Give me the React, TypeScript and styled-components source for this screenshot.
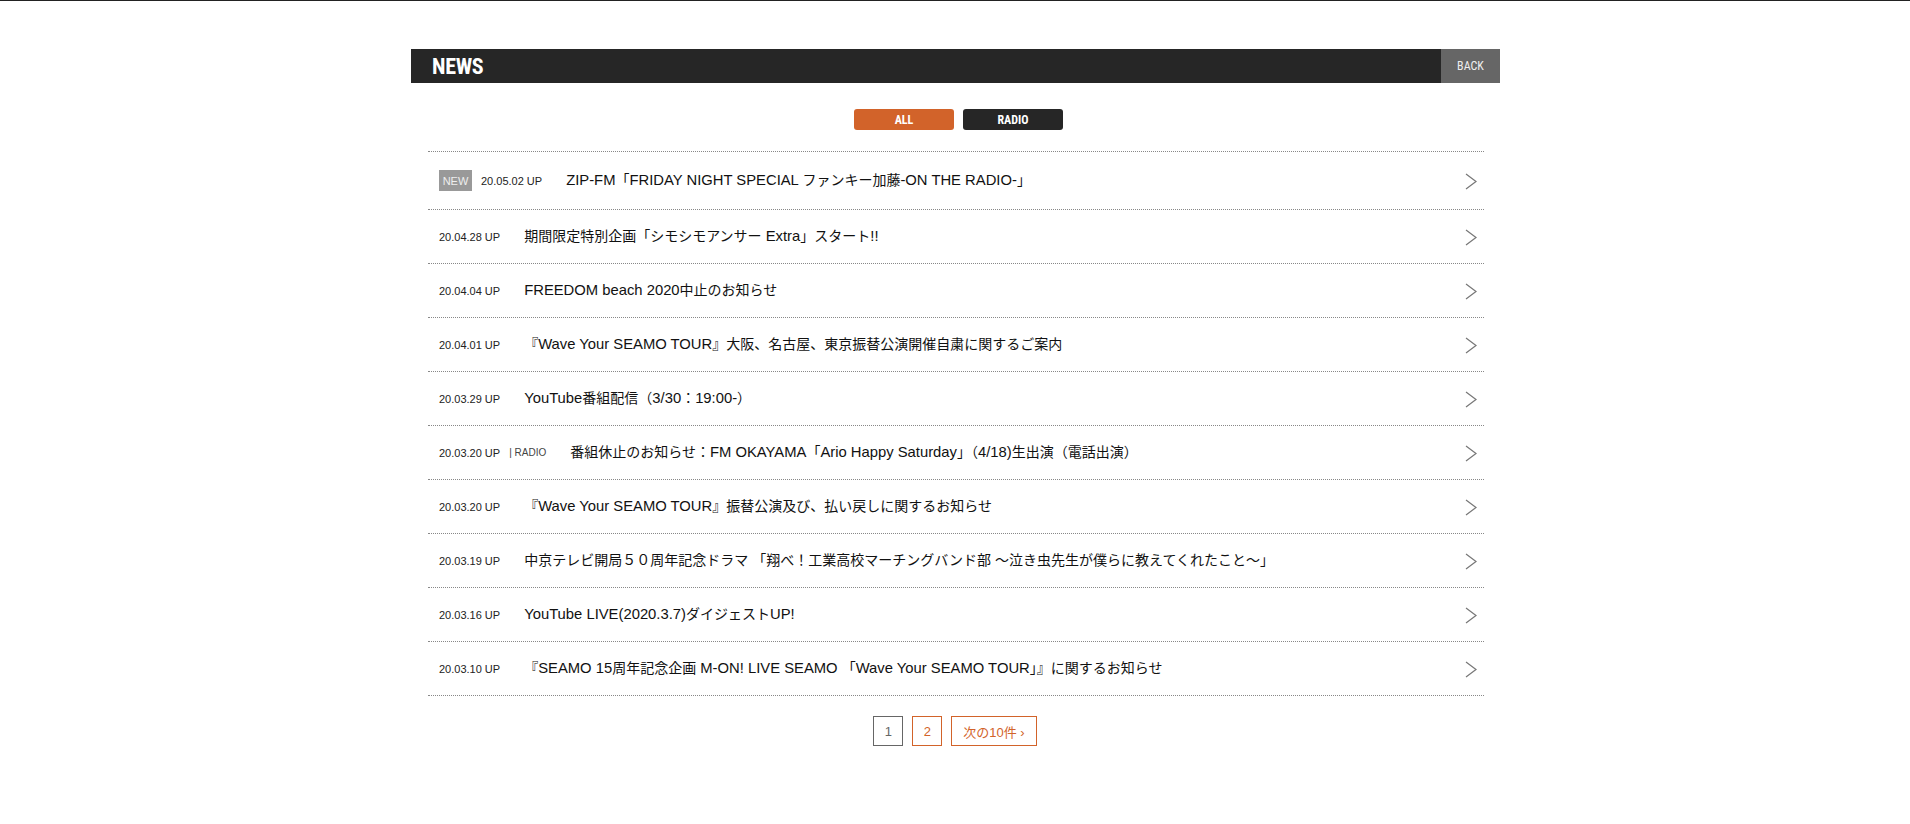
import React from "react";
import styled, { createGlobalStyle } from "styled-components";

const GlobalStyle = createGlobalStyle`
  html, body { margin: 0; padding: 0; background: #fff; }
  body {
    border-top: 1px solid #222;
    font-family: "Liberation Sans", "Noto Sans CJK JP", sans-serif;
    color: #222;
  }
`;

const condensed = `"Roboto Condensed", "Liberation Sans Narrow", "DejaVu Sans Condensed", Roboto, sans-serif`;

const Page = styled.div`
  width: 1090px;
  margin: 48px auto 0;
`;

const HeaderBar = styled.div`
  display: flex;
  align-items: stretch;
  justify-content: space-between;
  height: 34px;
  margin-left: 1px;
  background: #262626;
`;

const Title = styled.h1`
  margin: 0;
  padding-left: 21px;
  display: flex;
  align-items: center;
  font-family: ${condensed};
  font-stretch: condensed;
  font-weight: 700;
  font-size: 22px;
  color: #fff;
  letter-spacing: -0.3px;
`;

const BackButton = styled.a`
  width: 59px;
  display: flex;
  align-items: center;
  justify-content: center;
  background: #666;
  color: #eee;
  font-family: ${condensed};
  font-stretch: condensed;
  font-size: 12px;
  text-decoration: none;
`;

const FilterBar = styled.div`
  display: flex;
  justify-content: center;
  gap: 9px;
  margin-top: 26px;
  padding-left: 7px;
`;

const FilterButton = styled.button<{ $active?: boolean }>`
  width: 100px;
  height: 21px;
  border: none;
  border-radius: 3px;
  padding: 0;
  background: ${(p) => (p.$active ? "#d2632a" : "#262626")};
  color: #fff;
  font-family: ${condensed};
  font-stretch: condensed;
  font-weight: 700;
  font-size: 12px;
  cursor: pointer;
`;

const List = styled.ul`
  list-style: none;
  margin: 21px 16px 0 18px;
  padding: 0;
  border-top: 1px dotted #888;
`;

const Row = styled.li`
  display: flex;
  align-items: center;
  min-height: 17px;
  padding: 18px 7px 18px 11px;
  border-bottom: 1px dotted #888;
`;

const Badge = styled.span`
  display: inline-flex;
  align-items: center;
  justify-content: center;
  width: 33px;
  height: 21px;
  margin-right: 9px;
  background: #999;
  color: #eee;
  font-size: 11px;
`;

const DateText = styled.span`
  font-size: 11px;
  color: #222;
  white-space: nowrap;
`;

const Category = styled.span`
  margin-left: 9px;
  font-size: 10px;
  color: #444;
  white-space: nowrap;
`;

const ItemTitle = styled.span`
  display: block;
  height: 17px;
  margin-left: 24px;
  font-size: 14px;
  line-height: 17px;
  white-space: nowrap;
  color: #111;
`;

const Latin = styled.span`
  font-size: 14.8px;
  line-height: 1;
`;

const Chevron = styled.svg`
  margin: 1px 0 -1px auto;
  flex-shrink: 0;
`;

const Pager = styled.div`
  display: flex;
  justify-content: center;
  gap: 9px;
  margin-top: 20px;
`;

const PageBox = styled.a<{ $current?: boolean }>`
  min-width: 28px;
  height: 28px;
  display: inline-flex;
  align-items: center;
  justify-content: center;
  border: 1px solid ${(p) => (p.$current ? "#666" : "#d2632a")};
  color: ${(p) => (p.$current ? "#666" : "#d2632a")};
  font-size: 13px;
  text-decoration: none;
`;

const NextBox = styled(PageBox)`
  padding: 0 11px;
`;

type Item = { date: string; title: string; isNew?: boolean; cat?: string };

const items: Item[] = [
  { date: "20.05.02 UP", isNew: true, title: "ZIP-FM「FRIDAY NIGHT SPECIAL ファンキー加藤-ON THE RADIO-」" },
  { date: "20.04.28 UP", title: "期間限定特別企画「シモシモアンサー Extra」スタート!!" },
  { date: "20.04.04 UP", title: "FREEDOM beach 2020中止のお知らせ" },
  { date: "20.04.01 UP", title: "『Wave Your SEAMO TOUR』大阪、名古屋、東京振替公演開催自粛に関するご案内" },
  { date: "20.03.29 UP", title: "YouTube番組配信（3/30：19:00-）" },
  { date: "20.03.20 UP", cat: "| RADIO", title: "番組休止のお知らせ：FM OKAYAMA「Ario Happy Saturday」（4/18)生出演（電話出演）" },
  { date: "20.03.20 UP", title: "『Wave Your SEAMO TOUR』振替公演及び、払い戻しに関するお知らせ" },
  { date: "20.03.19 UP", title: "中京テレビ開局５０周年記念ドラマ 「翔べ！工業高校マーチングバンド部 〜泣き虫先生が僕らに教えてくれたこと〜」" },
  { date: "20.03.16 UP", title: "YouTube LIVE(2020.3.7)ダイジェストUP!" },
  { date: "20.03.10 UP", title: "『SEAMO 15周年記念企画 M-ON! LIVE SEAMO 「Wave Your SEAMO TOUR」』に関するお知らせ" },
];

function renderTitle(t: string) {
  return t.split(/([\u0020-\u007e]+)/).map((part, i) =>
    /^[\u0020-\u007e]+$/.test(part) ? <Latin key={i}>{part}</Latin> : part
  );
}

export default function App() {
  return (
    <>
      <GlobalStyle />
      <Page>
        <HeaderBar>
          <Title>NEWS</Title>
          <BackButton href="#">BACK</BackButton>
        </HeaderBar>
        <FilterBar>
          <FilterButton $active>ALL</FilterButton>
          <FilterButton>RADIO</FilterButton>
        </FilterBar>
        <List>
          {items.map((it, i) => (
            <Row key={i}>
              {it.isNew && <Badge>NEW</Badge>}
              <DateText>{it.date}</DateText>
              {it.cat && <Category>{it.cat}</Category>}
              <ItemTitle>{renderTitle(it.title)}</ItemTitle>
              <Chevron width="12" height="17" viewBox="0 0 12 17">
                <polyline points="1,1 11,8.5 1,16" fill="none" stroke="#777" strokeWidth="1.2" />
              </Chevron>
            </Row>
          ))}
        </List>
        <Pager>
          <PageBox $current>1</PageBox>
          <PageBox href="#">2</PageBox>
          <NextBox href="#">次の10件 ›</NextBox>
        </Pager>
      </Page>
    </>
  );
}
